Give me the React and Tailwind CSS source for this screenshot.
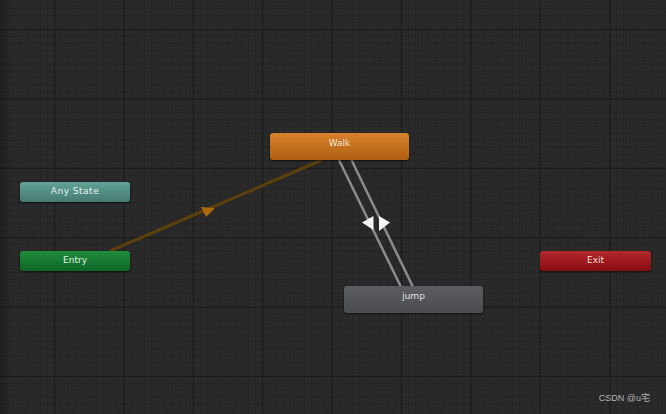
import React from "react";

const nodes = [
  { label: "Walk", x: 270, y: 133, w: 139, h: 27, cls: "pb-[5px] bg-gradient-to-b from-[#d8832c] to-[#b05f10] text-[#f3e6d8]" },
  { label: "Any State", x: 20, y: 182, w: 110, h: 20, cls: "bg-gradient-to-b from-[#62a398] to-[#467a70] text-[#e8f2ef] tracking-[0.5px]" },
  { label: "Entry", x: 20, y: 251, w: 110, h: 20, cls: "bg-gradient-to-b from-[#1f8e3d] to-[#0e6526] text-[#e4f2e7]" },
  { label: "Exit", x: 540, y: 251, w: 111, h: 20, cls: "bg-gradient-to-b from-[#b2282c] to-[#880b0e] text-[#f2dede]" },
  { label: "jump", x: 344, y: 286, w: 139, h: 27, cls: "pb-[5px] bg-gradient-to-b from-[#5b5d61] to-[#4a4c50] text-[#e2e2e2]" },
];

function Grid() {
  return (
    <svg className="absolute inset-0" width="666" height="414">
      <defs>
        <pattern id="minor" x="54" y="29" width="6.94" height="6.94" patternUnits="userSpaceOnUse">
          <rect width="6.94" height="1" fill="#252525" />
          <rect width="1" height="6.94" fill="#252525" />
        </pattern>
        <pattern id="major" x="54" y="29" width="69.4" height="69.4" patternUnits="userSpaceOnUse">
          <rect width="69.4" height="1.2" fill="#1b1b1b" />
          <rect width="1.2" height="69.4" fill="#1b1b1b" />
        </pattern>
        <linearGradient id="edge" x1="0" x2="1" y1="0" y2="0">
          <stop offset="0" stopColor="#000" stopOpacity="0.25" />
          <stop offset="1" stopColor="#000" stopOpacity="0" />
        </linearGradient>
      </defs>
      <rect width="666" height="414" fill="#2a2a2a" />
      <rect width="666" height="414" fill="url(#minor)" />
      <rect width="666" height="414" fill="url(#major)" />
      <rect width="12" height="414" fill="url(#edge)" />

      {/* Entry -> Walk */}
      <line x1="110" y1="251" x2="322" y2="160" stroke="#5c400c" strokeWidth="3" />
      <polygon points="201,207 215,208 206,217" fill="#a86a0d" />

      {/* Walk <-> jump */}
      <line x1="339" y1="160" x2="401" y2="287" stroke="#8c8c8c" strokeWidth="2.5" />
      <line x1="351.5" y1="160" x2="413" y2="287" stroke="#8c8c8c" strokeWidth="2.5" />
      <polygon points="362,222.5 373.5,216 373.5,230" fill="#f4f4f4" />
      <polygon points="390,222.5 379,216 379,231" fill="#f4f4f4" />
    </svg>
  );
}

export default function App() {
  return (
    <div className="relative w-[666px] h-[414px] overflow-hidden bg-[#2a2a2a] font-['DejaVu_Sans',sans-serif]">
      <Grid />
      {nodes.map((n) => (
        <div
          key={n.label}
          className={`absolute flex items-center justify-center rounded-[3px] text-[9px] shadow-[0_1px_2px_rgba(0,0,0,0.6)] ${n.cls}`}
          style={{ left: n.x, top: n.y, width: n.w, height: n.h }}
        >
          {n.label}
        </div>
      ))}
      <div className="absolute right-[16px] top-[392px] text-[9px] text-[#b4b4b4] font-['Liberation_Sans','Noto_Sans_CJK_SC',sans-serif]">
        CSDN @u宅
      </div>
    </div>
  );
}
